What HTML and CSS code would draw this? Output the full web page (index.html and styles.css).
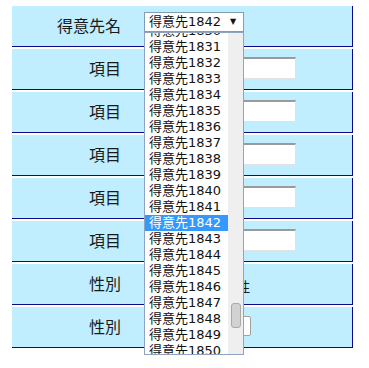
FILE: index.html
```html
<!DOCTYPE html>
<html lang="ja">
<head>
<meta charset="utf-8">
<link rel="stylesheet" href="styles.css">
</head>
<body>
<div class="form">
  <div class="row">
    <div class="label">得意先名</div>
    <div class="value top"><div class="select"><span class="sel-text">得意先1842</span><span class="arrow">▼</span></div></div>
  </div>
  <div class="row"><div class="label">項目</div><div class="value"><div class="input"></div></div></div>
  <div class="row"><div class="label">項目</div><div class="value"><div class="input"></div></div></div>
  <div class="row"><div class="label">項目</div><div class="value"><div class="input"></div></div></div>
  <div class="row"><div class="label">項目</div><div class="value"><div class="input"></div></div></div>
  <div class="row"><div class="label">項目</div><div class="value"><div class="input"></div></div></div>
  <div class="row">
    <div class="label">性別</div>
    <div class="value"><span class="radio-text">○男性 ○女性</span></div>
  </div>
  <div class="row">
    <div class="label">性別</div>
    <div class="value"><div class="small-select">男性</div></div>
  </div>
</div>

<div class="dropdown">
  <div class="list">
    <div class="items">
      <div class="item">得意先1830</div>
      <div class="item">得意先1831</div>
      <div class="item">得意先1832</div>
      <div class="item">得意先1833</div>
      <div class="item">得意先1834</div>
      <div class="item">得意先1835</div>
      <div class="item">得意先1836</div>
      <div class="item">得意先1837</div>
      <div class="item">得意先1838</div>
      <div class="item">得意先1839</div>
      <div class="item">得意先1840</div>
      <div class="item">得意先1841</div>
      <div class="item selected">得意先1842</div>
      <div class="item">得意先1843</div>
      <div class="item">得意先1844</div>
      <div class="item">得意先1845</div>
      <div class="item">得意先1846</div>
      <div class="item">得意先1847</div>
      <div class="item">得意先1848</div>
      <div class="item">得意先1849</div>
      <div class="item">得意先1850</div>
    </div>
  </div>
  <div class="scrollbar"><div class="thumb"></div></div>
</div>
</body>
</html>
```

FILE: styles.css
```css
html, body {
  margin: 0;
  padding: 0;
  background: #ffffff;
}

body {
  font-family: "Noto Sans CJK JP", "Noto Sans", sans-serif;
  color: #1a1a1a;
}

.form {
  padding: 6px 0 0 12px;
  width: 341px;
}

.row {
  display: flex;
  height: 40px;
  background: #c0eeff;
  border-bottom: 1px solid #0a0a8c;
  border-right: 1px solid #0a0a8c;
  margin-bottom: 2px;
}

.label {
  width: 120px;
  box-sizing: border-box;
  padding-right: 11px;
  text-align: right;
  font-size: 16px;
  line-height: 38px;
  flex: none;
}

.value {
  flex: 1;
  display: flex;
  align-items: center;
  padding-left: 12px;
  padding-bottom: 3px;
}

.value.top {
  align-items: flex-start;
  padding-top: 6px;
  padding-bottom: 0;
}

.select {
  width: 100px;
  height: 20px;
  box-sizing: border-box;
  background: #fff;
  border: 1px solid #7f9db9;
  display: flex;
  align-items: center;
  padding-left: 4px;
  font-family: "DejaVu Sans", "Noto Sans CJK JP", sans-serif;
  font-size: 13px;
  line-height: 18px;
  color: #111;
}

.sel-text {
  flex: none;
}

.arrow {
  font-size: 8px;
  margin-left: 9px;
  line-height: 18px;
}

.input {
  width: 152px;
  height: 22px;
  box-sizing: border-box;
  background: #fff;
  border-style: solid;
  border-width: 2px 1px 1px 2px;
  border-color: #9a9a9a #e2e2e2 #e2e2e2 #b8b8b8;
}

.radio-text {
  font-size: 14px;
  margin-left: 19px;
  padding-top: 7px;
  white-space: nowrap;
}

.small-select {
  width: 107px;
  height: 20px;
  box-sizing: border-box;
  background: #fff;
  border: 1px solid #a0a0a0;
  border-radius: 2px;
  font-size: 14px;
  line-height: 18px;
  padding-left: 4px;
}

.dropdown {
  position: absolute;
  left: 144px;
  top: 32px;
  width: 100px;
  height: 323px;
  box-sizing: border-box;
  border: 1px solid #8ea4c0;
  background: #fff;
  display: flex;
  overflow: hidden;
}

.list {
  width: 83px;
  height: 100%;
  overflow: hidden;
}

.items {
  margin-top: -10px;
}

.item {
  height: 16px;
  line-height: 16px;
  font-family: "DejaVu Sans", "Noto Sans CJK JP", sans-serif;
  font-size: 13px;
  padding-left: 4px;
  color: #111;
  white-space: nowrap;
}

.item.selected {
  background: #3399ff;
  color: #fff;
}

.scrollbar {
  width: 15px;
  height: 100%;
  background: #efefef;
  position: relative;
}

.thumb {
  position: absolute;
  left: 3px;
  top: 270px;
  width: 10px;
  height: 25px;
  box-sizing: border-box;
  background: #d2d2d2;
  border: 1px solid #a9a9a9;
  border-radius: 3px;
}
```
